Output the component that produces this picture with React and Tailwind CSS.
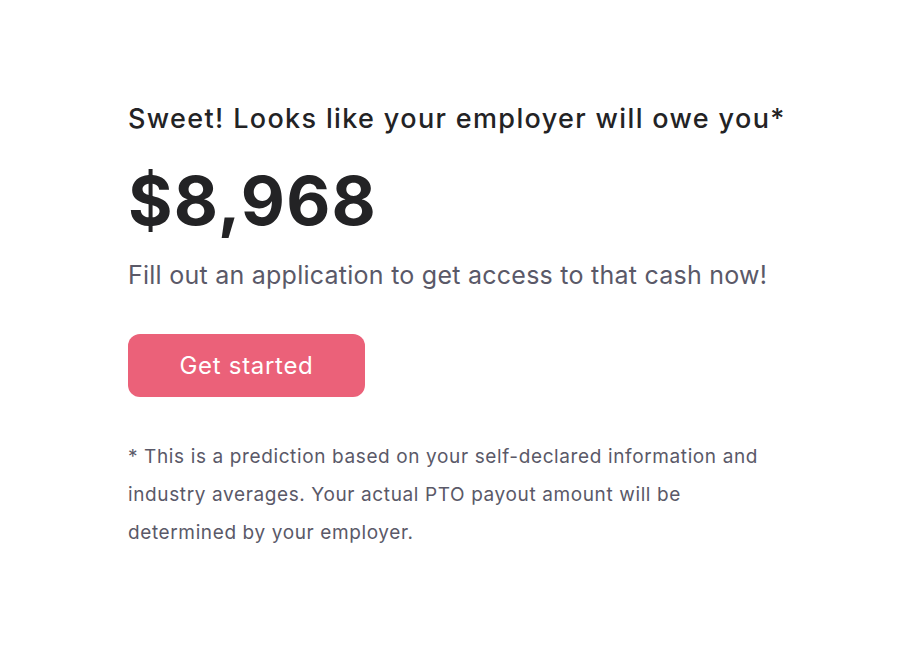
export default function App() {
  return (
    <div className="min-h-screen bg-white" style={{ fontFamily: "Inter, 'Noto Sans', sans-serif" }}>
      <div className="pl-[128px] pt-[100px] pr-10">
        <h2 className="text-[27px] leading-[38px] font-medium tracking-[1.35px] text-[#232325]">
          Sweet! Looks like your employer will owe you*
        </h2>
        <div className="mt-[20px] text-[68px] leading-[84px] font-bold tracking-[1.2px] text-[#232325]">$8,968</div>
        <p className="mt-[15px] text-[25px] leading-[36px] tracking-[0.25px] text-[#5a5968]">
          Fill out an application to get access to that cash now!
        </p>
        <button
          type="button"
          className="mt-[41px] w-[237px] h-[63px] rounded-xl bg-[#eb6179] text-white text-[24px] tracking-[0.7px]"
        >
          Get started
        </button>
        <p className="mt-[41px] max-w-[650px] text-[19px] leading-[38px] tracking-[0.62px] text-[#5a5968]">
          * This is a prediction based on your self-declared information and industry averages. Your actual PTO payout amount will be determined by your employer.
        </p>
      </div>
    </div>
  );
}
